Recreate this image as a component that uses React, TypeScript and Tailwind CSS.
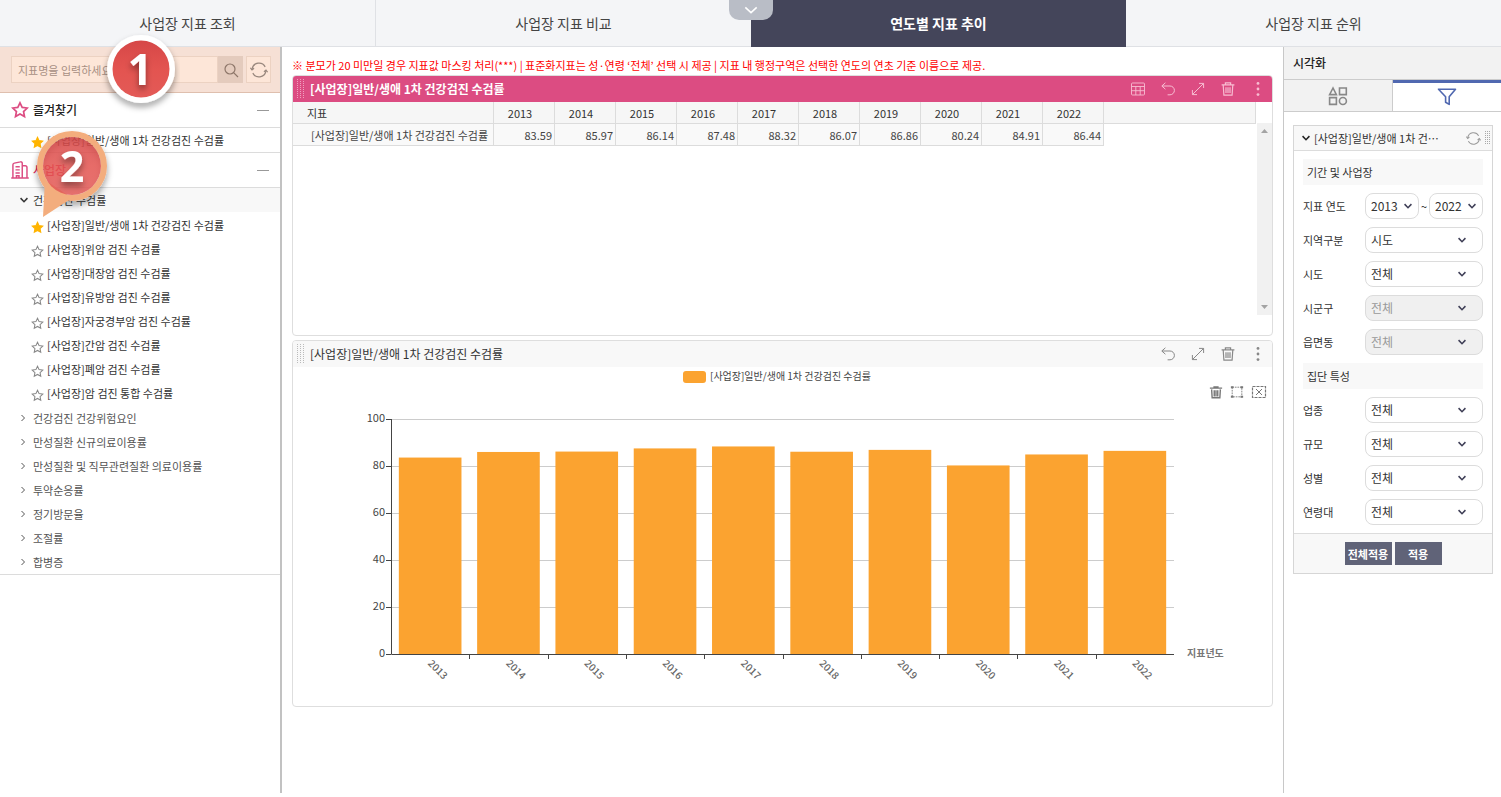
import { useState } from "react";
import type { ReactNode } from "react";
import clsx from "clsx";

const INDICATOR = "[사업장]일반/생애 1차 건강검진 수검률";

const NAV = ["사업장 지표 조회", "사업장 지표 비교", "연도별 지표 추이", "사업장 지표 순위"];

const INDICATORS = [
  INDICATOR,
  "[사업장]위암 검진 수검률",
  "[사업장]대장암 검진 수검률",
  "[사업장]유방암 검진 수검률",
  "[사업장]자궁경부암 검진 수검률",
  "[사업장]간암 검진 수검률",
  "[사업장]폐암 검진 수검률",
  "[사업장]암 검진 통합 수검률",
];

const GROUPS = [
  "건강검진 건강위험요인",
  "만성질환 신규의료이용률",
  "만성질환 및 직무관련질환 의료이용률",
  "투약순응률",
  "정기방문율",
  "조절률",
  "합병증",
];

const DATA = [
  { year: 2013, value: 83.59 },
  { year: 2014, value: 85.97 },
  { year: 2015, value: 86.14 },
  { year: 2016, value: 87.48 },
  { year: 2017, value: 88.32 },
  { year: 2018, value: 86.07 },
  { year: 2019, value: 86.86 },
  { year: 2020, value: 80.24 },
  { year: 2021, value: 84.91 },
  { year: 2022, value: 86.44 },
];

/* ---------- icons ---------- */

function Icon({ size = 16, width = 1, className, children }: { size?: number; width?: number; className?: string; children: ReactNode }) {
  return (
    <svg
      width={size}
      height={size}
      viewBox="0 0 16 16"
      fill="none"
      stroke="currentColor"
      strokeWidth={width}
      className={clsx("shrink-0", className)}
      aria-hidden="true"
    >
      {children}
    </svg>
  );
}

const STAR = "M8 1.6l1.95 4.1 4.5.55-3.3 3.1.85 4.45L8 11.6l-4 2.2.85-4.45-3.3-3.1 4.5-.55z";

function GridIcon() {
  return (
    <Icon width={0.9}>
      <rect x="1.5" y="2" width="13" height="12" rx="1" />
      <path d="M1.5 5.5h13M1.5 9.7h13M5.8 5.5V14M10.2 5.5V14" />
    </Icon>
  );
}

function UndoIcon() {
  return (
    <Icon>
      <path d="M5.4 1.8L1.8 5l3.6 3.2M2 5h8a4.4 4.4 0 0 1 0 8.8H7.6" />
    </Icon>
  );
}

function ExpandIcon() {
  return (
    <Icon>
      <path d="M2.5 13.5l11-11M9 2.4h4.6V7M2.4 9v4.6H7" />
    </Icon>
  );
}

function TrashIcon() {
  return (
    <Icon width={1.2}>
      <path d="M1.6 3.8h12.8M5.4 3.6V1.8h5.2v1.8M3.2 4l.7 10.2h8.2L12.8 4M6 6.2v5.8M8 6.2v5.8M10 6.2v5.8" />
    </Icon>
  );
}

function DotsIcon() {
  return (
    <Icon>
      <g fill="currentColor" stroke="none">
        <circle cx="8" cy="2.4" r="1.4" />
        <circle cx="8" cy="8" r="1.4" />
        <circle cx="8" cy="13.6" r="1.4" />
      </g>
    </Icon>
  );
}

function RefreshIcon({ size = 16 }: { size?: number }) {
  return (
    <Icon size={size} width={1.1}>
      <path d="M1.9 7a6.2 6.2 0 0 1 11.6-1.8M14.1 9a6.2 6.2 0 0 1-11.6 1.8" />
      <path d="M.4 6l1.4 1.9L3.6 6.4M15.6 10l-1.4-1.9-1.8 1.5" />
    </Icon>
  );
}

function ChevronDown({ className }: { className?: string }) {
  return (
    <Icon size={10} width={2.4} className={className}>
      <path d="M2.5 5L8 10.8 13.5 5" />
    </Icon>
  );
}

function Handle({ className }: { className?: string }) {
  return (
    <svg width="7" height="20" viewBox="0 0 7 20" fill="currentColor" className={clsx("shrink-0", className)} aria-hidden="true">
      {[0, 3, 6].map((x) =>
        [0, 2, 4, 6, 8, 10, 12, 14, 16, 18].map((y) => <rect key={`${x}-${y}`} x={x} y={y} width="1" height="1" />)
      )}
    </svg>
  );
}

/* ---------- left side ---------- */

function SectionHeader({ icon, title, className }: { icon: ReactNode; title: string; className?: string }) {
  return (
    <div className="flex h-[35px] items-center border-b border-[#dcdcdc] pr-[11px] pl-[11px]">
      {icon}
      <h2 className={clsx("ml-1 flex-1 text-xs font-medium", className)}>{title}</h2>
      <button type="button" aria-label={`${title} 접기`} className="flex h-4 w-3 items-center">
        <span className="h-px w-full bg-[#999]" />
      </button>
    </div>
  );
}

function IndicatorRow({ name, starred }: { name: string; starred?: boolean }) {
  return (
    <li className="flex h-6 items-center pl-[31px]">
      <Icon
        size={13}
        width={1.3}
        className={clsx("mt-1", starred ? "fill-[#ffb400] text-[#ffb400]" : "text-[#888]")}
      >
        <path d={STAR} />
      </Icon>
      <a href="#" className="ml-[3px] text-[#333]">{name}</a>
    </li>
  );
}

function Callouts() {
  return (
    <svg
      width="150"
      height="190"
      viewBox="30 30 150 190"
      className="pointer-events-none absolute top-[-17px] left-[30px] z-10"
      aria-hidden="true"
    >
      <defs>
        <filter id="drop" x="-30%" y="-30%" width="160%" height="170%">
          <feDropShadow dx="0" dy="4" stdDeviation="3" floodColor="#000" floodOpacity="0.4" />
        </filter>
        <linearGradient id="red" x1="0" y1="0" x2="0" y2="1">
          <stop offset="0" stopColor="#d64747" />
          <stop offset="0.5" stopColor="#e35450" />
          <stop offset="1" stopColor="#e35a57" />
        </linearGradient>
      </defs>
      <circle cx="141" cy="69" r="31" fill="none" stroke="#fff" strokeWidth="6" filter="url(#drop)" />
      <circle cx="141" cy="69" r="28.5" fill="url(#red)" />
      <circle cx="72" cy="166" r="32" fill="none" stroke="#f3ad7d" strokeWidth="6" filter="url(#drop)" />
      <path d="M45 180L43 217L72 198z" fill="#f3ad7d" />
      <circle cx="72" cy="166" r="29" fill="url(#red)" fillOpacity="0.86" />
      <g fill="#fff" fontFamily="'Noto Sans', sans-serif" fontSize="43" fontWeight="700" textAnchor="middle" filter="url(#drop)">
        <text x="140" y="85">1</text>
        <text x="72" y="182">2</text>
      </g>
    </svg>
  );
}

function Sidebar() {
  return (
    <aside className="relative w-[282px] shrink-0 border-r-2 border-[#c2c2c2]">
      <form className="flex h-[46px] items-center border-b border-[#dfbfae] bg-[#f6e0d5] pl-[11px]">
        <input
          type="text"
          aria-label="지표명 검색"
          placeholder="지표명을 입력하세요"
          className="h-[27px] w-[207px] border border-[#ecd2c2] bg-[#fde6d8] px-1.5 placeholder-[#a78f83] outline-none"
        />
        <button type="button" aria-label="검색" className="flex h-[27px] w-[25px] items-center justify-center bg-[#e4cbbd] text-[#8d7669]">
          <Icon width={1.2}>
            <circle cx="7" cy="7" r="5" />
            <path d="M10.6 10.6L15 15" />
          </Icon>
        </button>
        <button type="button" aria-label="새로고침" className="ml-[3px] flex h-[27px] w-[25px] items-center justify-center border border-[#ecd2c2] bg-[#fde6d8] text-[#98877d]">
          <RefreshIcon size={18} />
        </button>
      </form>

      <SectionHeader
        title="즐겨찾기"
        icon={
          <Icon size={18} width={1.5} className="text-[#dc4c82]">
            <path d={STAR} />
          </Icon>
        }
      />
      <ul className="border-b border-[#dcdcdc]">
        <IndicatorRow name={INDICATOR} starred />
      </ul>

      <SectionHeader
        title="사업장"
        className="text-[#e0245a]"
        icon={
          <Icon size={18} width={1.3} className="text-[#dc4c82]">
            <path d="M.2 15.2h15.6M1.7 15V3.4a1.600 1.600 0 0 1 1.300-1.500L8.400.8a1.300 1.300 0 0 1 1.600 1.300V15M10 4.200h2.600A1.600 1.600 0 0 1 14.200 5.800V15M4 5.200h3.800M4 7.900h3.800M4 10.600h3.800M4.800 15v-1.900h2.300v1.900" />
          </Icon>
        }
      />
      <button type="button" className="flex h-6 w-full items-center bg-[#f8f8f8] pl-[19px] text-[#333]">
        <ChevronDown />
        <span className="ml-1">건강검진 수검률</span>
      </button>
      <ul className="py-px">
        {INDICATORS.map((name, i) => (
          <IndicatorRow key={name} name={name} starred={i === 0} />
        ))}
      </ul>
      <ul className="border-b border-[#dcdcdc]">
        {GROUPS.map((name) => (
          <li key={name}>
            <button type="button" className="flex h-6 w-full items-center pl-[19px] text-[#555]">
              <Icon size={8} width={2}>
                <path d="M5 2l6 6-6 6" />
              </Icon>
              <span className="ml-1.5">{name}</span>
            </button>
          </li>
        ))}
      </ul>
      <Callouts />
    </aside>
  );
}

/* ---------- centre ---------- */

function Tool({ label, children }: { label: string; children: ReactNode }) {
  return (
    <button type="button" aria-label={label} title={label}>
      {children}
    </button>
  );
}

function PanelHeader({ dark, children }: { dark?: boolean; children?: ReactNode }) {
  return (
    <header
      className={clsx(
        "flex h-[26px] items-center pr-1.5 pl-1",
        dark ? "bg-[#dc4c82] text-[#f7bdd2]" : "bg-[#f8f8f8] text-[#888]"
      )}
    >
      <Handle className={dark ? "text-[#f0a0c0]" : "text-[#bbb]"} />
      <h3 className={clsx("ml-1.5 flex-1 text-xs", dark ? "font-bold text-white" : "text-[#333]")}>{INDICATOR}</h3>
      <div className="flex items-center gap-3.5">
        {children}
        <Tool label="되돌리기"><UndoIcon /></Tool>
        <Tool label="확대"><ExpandIcon /></Tool>
        <Tool label="삭제"><TrashIcon /></Tool>
        <Tool label="더보기"><DotsIcon /></Tool>
      </div>
    </header>
  );
}

function TablePanel() {
  return (
    <section className="overflow-hidden rounded-sm border border-[#dedede] pb-5">
      <PanelHeader dark>
        <Tool label="표"><GridIcon /></Tool>
      </PanelHeader>
      <div className="flex min-h-[213px] gap-px">
        <div className="min-w-0 flex-1">
          <table className="w-full table-fixed border-separate border-spacing-0 text-[#444]">
            <thead>
              <tr className="h-[22px] bg-[#f6f6f6]">
                <th className="w-[201px] border-r border-b border-[#dcdcdc] pl-3.5 text-left font-normal text-[#333]">지표</th>
                {DATA.map((d) => (
                  <th key={d.year} className="w-[61px] border-r border-b border-[#dcdcdc] pr-2 text-center font-normal text-[#333]">
                    {d.year}
                  </th>
                ))}
                <th className="border-r border-b border-[#dcdcdc]" />
              </tr>
            </thead>
            <tbody>
              <tr className="h-[22px]">
                <td className="border-r border-b border-[#dcdcdc] bg-[#f9f9f9] pl-[18px] whitespace-nowrap">{INDICATOR}</td>
                {DATA.map((d) => (
                  <td key={d.year} className="border-r border-b border-[#dcdcdc] bg-[#f9f9f9] pr-0.5 text-right">
                    {d.value}
                  </td>
                ))}
                <td />
              </tr>
            </tbody>
          </table>
        </div>
        <div className="mt-[21px] flex w-[15px] flex-col items-center justify-between bg-[#f1f1f1] py-1.5 text-[#a3a3a3]">
          <svg width="7" height="4" viewBox="0 0 7 4" fill="currentColor" aria-hidden="true"><path d="M0 4L3.5 0 7 4z" /></svg>
          <svg width="7" height="4" viewBox="0 0 7 4" fill="currentColor" aria-hidden="true"><path d="M0 0L3.5 4 7 0z" /></svg>
        </div>
      </div>
    </section>
  );
}

function BarChart() {
  const left = 98;
  const right = 881;
  const top = 52;
  const bottom = 287;
  const band = (right - left) / DATA.length;
  const y = (v: number) => bottom - ((bottom - top) * v) / 100;

  return (
    <svg viewBox="0 0 979 339" className="block w-full" role="img" aria-label={INDICATOR}>
      <rect x="390" y="4" width="23" height="12" rx="3" fill="#fba330" />
      <text x="417" y="13" fontSize="10" fill="#444">{INDICATOR}</text>

      {[0, 20, 40, 60, 80, 100].map((t) => (
        <g key={t}>
          {t > 0 && <path d={`M${left} ${Math.round(y(t)) + 0.5}H${right}`} stroke="#ccc" />}
          <path d={`M${left - 5} ${Math.round(y(t)) + 0.5}h5`} stroke="#444" />
          <text x={left - 6} y={y(t) + 3} fontSize="11" fill="#444" textAnchor="end">{t}</text>
        </g>
      ))}

      {DATA.map((d, i) => (
        <rect
          key={d.year}
          x={left + band * i + band * 0.1}
          y={y(d.value)}
          width={band * 0.8}
          height={bottom - y(d.value)}
          fill="#fba330"
        />
      ))}

      <path d={`M${left + 0.5} ${top}V${bottom + 0.5}H${right}`} stroke="#444" fill="none" />
      {DATA.map((d, i) => (
        <g key={d.year}>
          {i > 0 && <path d={`M${Math.round(left + band * i) + 0.5} ${bottom}v5`} stroke="#444" />}
          <text
            transform={`translate(${left + band * (i + 0.5) - 3} ${bottom + 10}) rotate(45)`}
            fontSize="10"
            fontWeight="500"
            fill="#666"
          >
            {d.year}
          </text>
        </g>
      ))}
      <text x="894" y="290" fontSize="10" fontWeight="700" fill="#777">지표년도</text>
    </svg>
  );
}

function ChartPanel() {
  return (
    <section className="relative mt-1 overflow-hidden rounded-sm border border-[#dedede]">
      <PanelHeader />
      <BarChart />
      <div className="absolute top-11 right-[5px] flex gap-[7px] text-[#777]">
        <Tool label="선택 지우기">
          <Icon size={14} width={1.6}>
            <path d="M1 3.6h14M5 2.2h6M3 5l.6 9.6h8.8L13 5M6 6v7M8 6v7M10 6v7" />
          </Icon>
        </Tool>
        <Tool label="영역 선택">
          <Icon size={14}>
            <path d="M2.500 2.500h11v11h-11z" strokeDasharray="2 1" />
            <path d="M1 2.500h3M12 2.500h3M1 13.500h3M12 13.500h3" strokeWidth="2.4" />
          </Icon>
        </Tool>
        <Tool label="영역 해제">
          <svg width="16" height="14" viewBox="0 0 16 14" fill="none" stroke="currentColor" aria-hidden="true">
            <rect x="1.5" y="1.5" width="13" height="11" strokeDasharray="3 1" strokeWidth="1.2" />
            <path d="M5 4l6 6M11 4l-6 6" />
          </svg>
        </Tool>
      </div>
    </section>
  );
}

/* ---------- right side ---------- */

function Select({ label, value, options, disabled, narrow }: { label: string; value: string; options: string[]; disabled?: boolean; narrow?: boolean }) {
  const [current, setCurrent] = useState(value);
  return (
    <div className="relative min-w-0 flex-1">
      <select
        id={label}
        aria-label={label}
        value={current}
        disabled={disabled}
        onChange={(e) => setCurrent(e.target.value)}
        className="h-[26px] w-full appearance-none rounded-lg border border-[#dcdcdc] bg-white pl-[5px] text-xs text-[#333] disabled:bg-[#f0f0f0] disabled:text-[#999] disabled:opacity-100"
      >
        {options.map((o) => (
          <option key={o}>{o}</option>
        ))}
      </select>
      <ChevronDown className={clsx("pointer-events-none absolute top-2 text-[#3d3d55]", narrow ? "right-1.5" : "right-4")} />
    </div>
  );
}

function Field({ label, value = "전체", options, disabled }: { label: string; value?: string; options?: string[]; disabled?: boolean }) {
  return (
    <div className="flex items-center">
      <label htmlFor={label} className="w-[62px] shrink-0 text-[#333]">{label}</label>
      <Select label={label} value={value} options={options ?? [value]} disabled={disabled} />
    </div>
  );
}

function GroupTitle({ children }: { children: ReactNode }) {
  return <h4 className="flex h-[26px] items-center bg-[#f8f8f8] pl-1 text-[#333]">{children}</h4>;
}

function FilterPanel() {
  const years = DATA.map((d) => String(d.year));
  return (
    <aside className="w-[218px] shrink-0 border-l border-[#c8c8c8]">
      <h2 className="flex h-[33px] items-center border-b border-[#ccc] bg-[#f2f2f2] pl-[9px] text-xs font-medium">시각화</h2>
      <div className="flex h-8 border-b border-[#ccc]">
        <button type="button" aria-label="시각화 유형" className="flex flex-1 items-center justify-center border-r border-[#ccc] bg-[#f2f2f2] text-[#888]">
          <svg width="20" height="20" viewBox="0 0 20 20" fill="none" stroke="currentColor" strokeWidth="1.6" aria-hidden="true">
            <path d="M5 2L1.6 8.600h6.800zM11.500 2h6.800v6.600h-6.800zM1.600 11.600h6.800v6.800H1.600z" />
            <circle cx="14.9" cy="15" r="3.5" />
          </svg>
        </button>
        <button type="button" aria-label="필터" className="flex flex-1 items-center justify-center border-t-3 border-[#5068b0] text-[#5068b0]">
          <svg width="20" height="20" viewBox="0 0 20 20" fill="none" stroke="currentColor" strokeWidth="1.6" strokeLinejoin="round" aria-hidden="true">
            <path d="M1.5 2.2h17l-6.3 7.6v7.6l-3.6-2.2V9.8z" />
          </svg>
        </button>
      </div>

      <section className="mt-[13px] mr-2 ml-[9px] border border-[#d6d6d6]">
        <header className="flex h-[25px] items-center border-b border-[#dcdcdc] bg-[#f8f8f8] pr-0.5 pl-[7px]">
          <ChevronDown />
          <h3 className="ml-[3px] flex-1 text-[#333]">[사업장]일반/생애 1차 건⋯</h3>
          <button type="button" aria-label="초기화" className="mr-1 text-[#999]">
            <RefreshIcon size={15} />
          </button>
          <svg width="5" height="14" viewBox="0 0 5 14" fill="currentColor" className="shrink-0 text-[#aaa]" aria-hidden="true">
            {[0, 2, 4].map((x) =>
              [0, 2, 4, 6, 8, 10, 12].map((y) => <rect key={`${x}-${y}`} x={x} y={y} width="1" height="1" />)
            )}
          </svg>
        </header>
        <div className="flex flex-col gap-2 px-[9px] py-2">
          <GroupTitle>기간 및 사업장</GroupTitle>
          <div className="flex items-center">
            <label htmlFor="시작 연도" className="w-[62px] shrink-0 text-[#333]">지표 연도</label>
            <Select label="시작 연도" value="2013" options={years} narrow />
            <span className="w-2.5 text-center">~</span>
            <Select label="종료 연도" value="2022" options={years} narrow />
          </div>
          <Field label="지역구분" value="시도" />
          <Field label="시도" />
          <Field label="시군구" disabled />
          <Field label="읍면동" disabled />
          <GroupTitle>집단 특성</GroupTitle>
          <Field label="업종" />
          <Field label="규모" />
          <Field label="성별" options={["전체", "남", "여"]} />
          <Field label="연령대" />
        </div>
        <footer className="flex justify-center gap-[3px] border-t border-[#dcdcdc] bg-[#f8f8f8] py-2 font-bold text-white">
          <button type="button" className="h-[23px] w-[47px] bg-[#606378]">전체적용</button>
          <button type="button" className="h-[23px] w-[47px] bg-[#606378]">적용</button>
        </footer>
      </section>
    </aside>
  );
}

export default function App() {
  return (
    <div className="flex min-h-screen flex-col bg-white pb-1 font-['Noto_Sans_CJK_KR',sans-serif] text-[11px] leading-4 text-[#222]">
      <nav className="relative flex h-[47px] bg-[#f4f5f7]">
        {NAV.map((item, i) => (
          <a
            key={item}
            href="#"
            className={clsx(
              "flex flex-1 items-center justify-center border-b text-sm",
              i === 2 ? "border-[#44455a] bg-[#44455a] font-bold text-white" : "border-[#dfe1e5] text-[#444]",
              i === 0 && "border-r"
            )}
          >
            {item}
          </a>
        ))}
        <button
          type="button"
          aria-label="메뉴 펼치기"
          className="absolute top-0 left-1/2 flex h-5 w-11 -translate-x-1/2 items-center justify-center rounded-b-[10px] bg-[#b9bdc6] text-white"
        >
          <Icon size={14} width={1.8}>
            <path d="M1.5 5L8 11l6.5-6" />
          </Icon>
        </button>
      </nav>

      <div className="flex flex-1">
        <Sidebar />
        <main className="min-w-0 flex-1 px-[10px] pt-2">
          <p className="h-5 leading-5 text-[#f00]">
            ※ 분모가 20 미만일 경우 지표값 마스킹 처리(***) | 표준화지표는 성·연령 ‘전체’ 선택 시 제공 | 지표 내 행정구역은 선택한 연도의 연초 기준 이름으로 제공.
          </p>
          <TablePanel />
          <ChartPanel />
        </main>
        <FilterPanel />
      </div>
    </div>
  );
}
